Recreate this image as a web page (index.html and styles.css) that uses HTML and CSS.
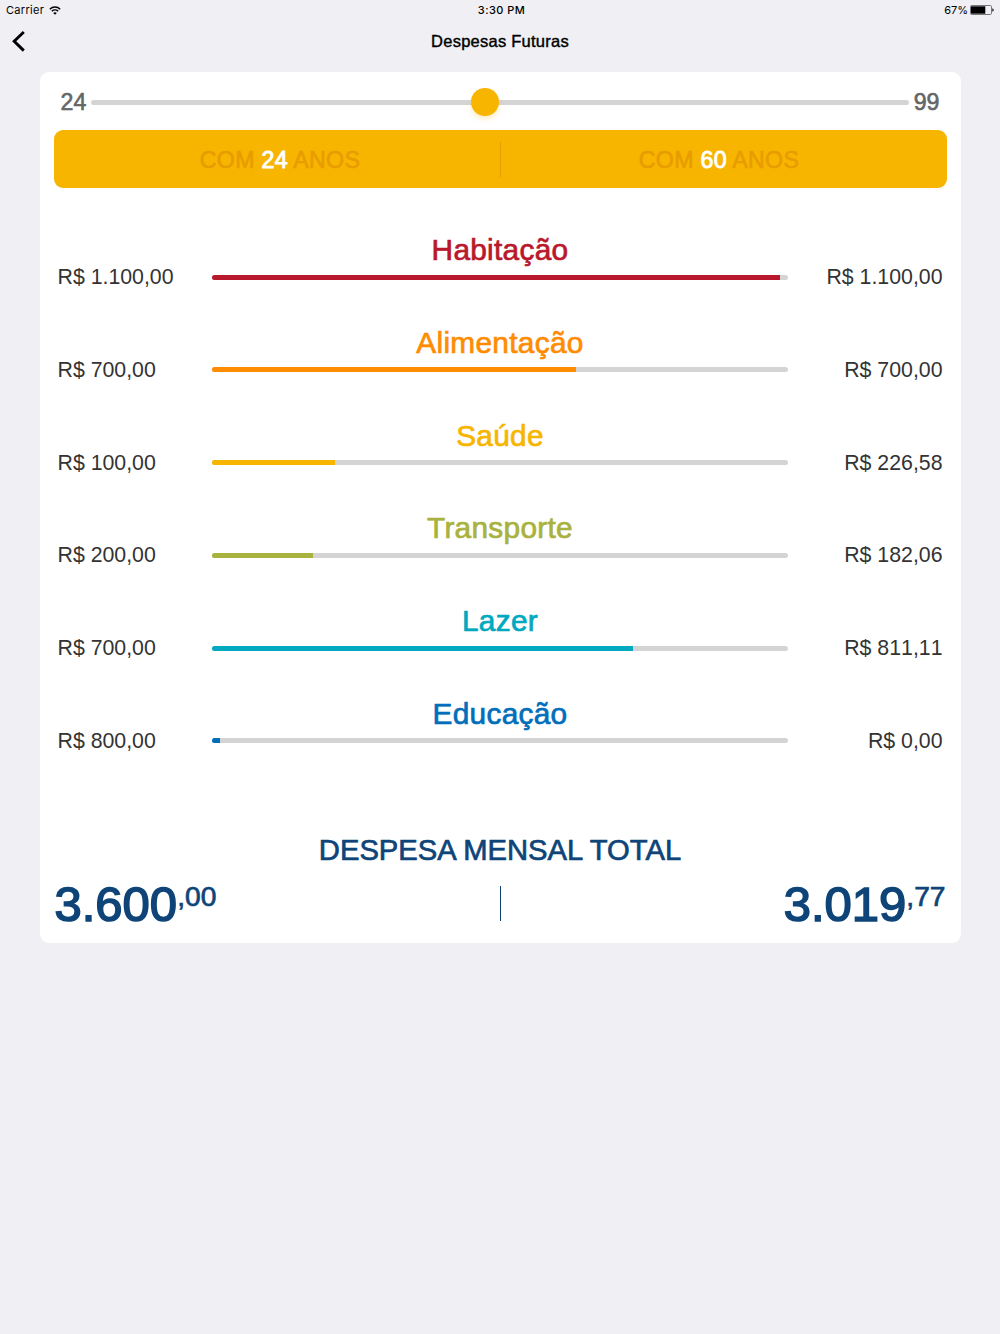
FILE: index.html
```html
<!DOCTYPE html>
<html lang="pt-BR">
<head>
  <meta charset="UTF-8">
  <meta name="viewport" content="width=device-width, initial-scale=1.0">
  <title>Despesas Futuras</title>
  <link rel="stylesheet" href="styles.css">
</head>
<body>
  <div class="status-bar">
    <div class="status-left">
      <span class="carrier">Carrier</span>
      <svg class="wifi" width="12" height="9" viewBox="0 0 12 9">
        <path d="M0.8 3.2a7.4 7.4 0 0 1 10.4 0M2.8 5.2a4.6 4.6 0 0 1 6.4 0" fill="none" stroke="#000" stroke-width="1.4"/>
        <path d="M6 8.8L4.2 7a2.6 2.6 0 0 1 3.6 0z"/>
      </svg>
    </div>
    <div class="status-time">3:30 PM</div>
    <div class="status-right">
      <span class="percent">67%</span>
      <svg class="battery" width="25" height="10" viewBox="0 0 25 10">
        <rect x="1.5" y="0.5" width="21" height="9" rx="1.2" fill="none" stroke="#77777b"/>
        <rect x="2" y="1.3" width="14.3" height="7.4"/>
        <path d="M23.4 3.3q1.3.4 1.3 1.7t-1.3 1.7z"/>
      </svg>
    </div>
  </div>

  <header class="nav-bar">
    <svg class="back" width="14" height="22" viewBox="0 0 14 22">
      <path d="M11.8 2L2.2 11.3l9.6 9.3" fill="none" stroke="#000" stroke-width="2.9"/>
    </svg>
    <h1>Despesas Futuras</h1>
  </header>

  <main class="card">
    <div class="slider">
      <span class="age-min">24</span>
      <div class="slider-track"><div class="knob"></div></div>
      <span class="age-max">99</span>
    </div>

    <div class="ages">
      <div class="age">COM <b>24</b> ANOS</div>
      <div class="divider"></div>
      <div class="age">COM <b>60</b> ANOS</div>
    </div>

    <section class="expenses">
      <div class="expense housing">
        <h2>Habitação</h2>
        <div class="row">
          <span>R$ 1.100,00</span>
          <div class="track"><div class="fill" style="width: 98.6%"></div></div>
          <span>R$ 1.100,00</span>
        </div>
      </div>
      <div class="expense food">
        <h2>Alimentação</h2>
        <div class="row">
          <span>R$ 700,00</span>
          <div class="track"><div class="fill" style="width: 63.2%"></div></div>
          <span>R$ 700,00</span>
        </div>
      </div>
      <div class="expense health">
        <h2>Saúde</h2>
        <div class="row">
          <span>R$ 100,00</span>
          <div class="track"><div class="fill" style="width: 21.4%"></div></div>
          <span>R$ 226,58</span>
        </div>
      </div>
      <div class="expense transport">
        <h2>Transporte</h2>
        <div class="row">
          <span>R$ 200,00</span>
          <div class="track"><div class="fill" style="width: 17.5%"></div></div>
          <span>R$ 182,06</span>
        </div>
      </div>
      <div class="expense leisure">
        <h2>Lazer</h2>
        <div class="row">
          <span>R$ 700,00</span>
          <div class="track"><div class="fill" style="width: 73.1%"></div></div>
          <span>R$ 811,11</span>
        </div>
      </div>
      <div class="expense education">
        <h2>Educação</h2>
        <div class="row">
          <span>R$ 800,00</span>
          <div class="track"><div class="fill" style="width: 1.4%"></div></div>
          <span>R$ 0,00</span>
        </div>
      </div>
    </section>

    <footer class="total">
      <h3>DESPESA MENSAL TOTAL</h3>
      <div class="total-values">
        <div class="value">3.600<small>,00</small></div>
        <div class="divider"></div>
        <div class="value">3.019<small>,77</small></div>
      </div>
    </footer>
  </main>
</body>
</html>
```
FILE: styles.css
```css
* {
  box-sizing: border-box;
}
body {
  margin: 0;
  min-height: 1334px;
  background-color: #efeff4;
  font-family: "Liberation Sans", Arial, sans-serif;
  color: #000;
}
h1, h2, h3 {
  margin: 0;
  font-weight: normal;
}

/* status bar */
.status-bar {
  display: grid;
  grid-template-columns: 1fr auto 1fr;
  align-items: center;
  height: 20px;
  padding: 0 6px;
  font-family: Inter, sans-serif;
  font-size: 11px;
  letter-spacing: 0.3px;
}
.status-left, .status-right {
  display: flex;
  align-items: center;
  gap: 5px;
}
.status-right {
  justify-content: flex-end;
  gap: 1px;
  letter-spacing: 0;
}
.status-time {
  padding-left: 3px;
  font-weight: 500;
  letter-spacing: 0.45px;
}

/* navigation */
.nav-bar {
  display: grid;
  grid-template-columns: 14px 1fr 14px;
  align-items: center;
  height: 42px;
  padding: 0 12px;
}
.nav-bar h1 {
  text-align: center;
  font-size: 16.5px;
  letter-spacing: 0.25px;
  -webkit-text-stroke: 0.4px;
}

.card {
  width: 921px;
  height: 871px;
  margin: 10px auto 0;
  padding: 14px;
  background-color: #fff;
  border-radius: 9px;
}

/* age slider */
.slider {
  display: flex;
  align-items: center;
  gap: 5px;
  height: 32px;
  padding: 0 7px;
  font-size: 23.2px;
  color: #666;
  -webkit-text-stroke: 0.6px;
}
.slider-track {
  position: relative;
  flex: 1;
  height: 5px;
  border-radius: 3px;
  background-color: #d4d4d4;
}
.knob {
  position: absolute;
  left: 380px;
  top: -12px;
  width: 28px;
  height: 28px;
  border-radius: 50%;
  background-color: #f7b500;
  box-shadow: 0 3px 5px rgba(247, 181, 0, 0.25);
}

.ages {
  display: grid;
  grid-template-columns: 1fr 1px 1fr;
  align-items: center;
  height: 58px;
  margin-top: 12px;
  border-radius: 9px;
  background-color: #f7b500;
  text-align: center;
  font-size: 23.2px;
  letter-spacing: 0.28px;
  color: #e89c00;
}
.age {
  padding: 3px 0 0 7px;
  -webkit-text-stroke: 0.6px;
}
.age + .divider + .age {
  padding: 3px 9px 0 0;
}
.age b {
  font-weight: normal;
  color: #fff;
  -webkit-text-stroke: 0.9px;
}
.divider {
  height: 35px;
  background-color: currentColor;
}

/* expenses */
.expenses {
  display: grid;
  grid-auto-rows: 92.8px;
  margin-top: 45px;
}
.expense h2 {
  height: 31px;
  line-height: 34px;
  text-align: center;
  font-size: 29.8px;
  letter-spacing: 0.3px;
  -webkit-text-stroke: 0.7px;
}
.row {
  display: grid;
  grid-template-columns: 1fr 576px 1fr;
  align-items: center;
  height: 24px;
  padding: 0 4px;
  font-size: 21.3px;
  font-kerning: none;
  color: #333;
}
.row span {
  padding-top: 1px;
}
.row span:last-child {
  text-align: right;
}
.track {
  height: 5px;
  border-radius: 3px;
  background-color: #d4d4d4;
  overflow: hidden;
}
.fill {
  height: 100%;
  background-color: currentColor;
}
.housing h2, .housing .fill {
  color: #b9172b;
}
.food h2, .food .fill {
  color: #ff8c00;
}
.health h2, .health .fill {
  color: #f7b500;
}
.transport h2, .transport .fill {
  color: #a8b23e;
}
.leisure h2, .leisure .fill {
  color: #00a9c0;
}
.education h2, .education .fill {
  color: #006eba;
}

/* monthly total */
.total {
  margin-top: 42px;
  color: #0e4477;
}
.total h3 {
  height: 36px;
  line-height: 36px;
  text-align: center;
  font-size: 29.2px;
  -webkit-text-stroke: 0.7px;
}
.total-values {
  display: grid;
  grid-template-columns: 1fr 1px 1fr;
  align-items: center;
  height: 72px;
}
.value {
  padding: 0 1px;
  font-size: 49px;
  line-height: 72px;
  -webkit-text-stroke: 1.6px;
}
.value small {
  font-size: 28.2px;
  line-height: 1;
  vertical-align: 15px;
  -webkit-text-stroke: 0.7px;
}
.value:last-child {
  text-align: right;
}
```
